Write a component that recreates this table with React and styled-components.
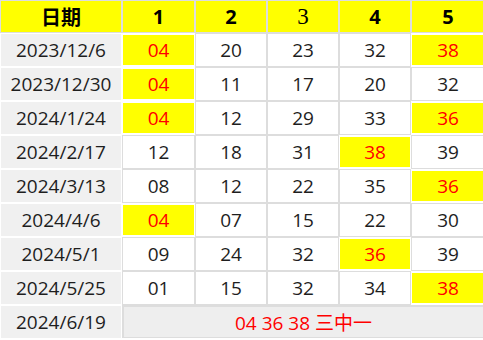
import { Fragment } from "react";
import styled, { createGlobalStyle, css } from "styled-components";

const GlobalStyle = createGlobalStyle`
  body {
    margin: 0;
    background: #ffffff;
    font-family: "Open Sans", "Noto Sans CJK SC", sans-serif;
  }
`;

const HITS = ["04", "36", "38"];

const draws = [
  { date: "2023/12/6", nums: ["04", "20", "23", "32", "38"] },
  { date: "2023/12/30", nums: ["04", "11", "17", "20", "32"] },
  { date: "2024/1/24", nums: ["04", "12", "29", "33", "36"] },
  { date: "2024/2/17", nums: ["12", "18", "31", "38", "39"] },
  { date: "2024/3/13", nums: ["08", "12", "22", "35", "36"] },
  { date: "2024/4/6", nums: ["04", "07", "15", "22", "30"] },
  { date: "2024/5/1", nums: ["09", "24", "32", "36", "39"] },
  { date: "2024/5/25", nums: ["01", "15", "32", "34", "38"] },
];

const Table = styled.div`
  display: grid;
  grid-template-columns: 120px 71px 70px 70px 70px 72px;
  grid-template-rows: 31px repeat(9, 32px);
  gap: 2px;
  padding: 1px 0 0 1px;
  width: 483px;
  box-sizing: border-box;
`;

const Cell = styled.div`
  display: flex;
  align-items: center;
  justify-content: center;
  font-size: 19px;
  color: #1e1e1e;
  white-space: nowrap;

  ${(p) =>
    p.$kind === "head" &&
    css`
      background: #ffff00;
      color: #000000;
      font-size: 20px;
      font-weight: 700;
      box-shadow: 0 0 0 1px #dddddd;
    `}
  ${(p) =>
    p.$kind === "date" &&
    css`
      background: #f0f0f0;
    `}
  ${(p) =>
    p.$kind === "plain" &&
    css`
      background: #ffffff;
      box-shadow: 0 0 0 1px #dddddd;
    `}
  ${(p) =>
    p.$kind === "hit" &&
    css`
      background: #ffff00;
      color: #ff0000;
      margin: 1px 0;
    `}
  ${(p) =>
    p.$kind === "summary" &&
    css`
      grid-column: 2 / span 5;
      background: #eeeeee;
      color: #ff0000;
      box-shadow: 0 0 0 1px #dddddd;
      border: 1px solid #dddddd;
    `}
  ${(p) =>
    p.$serif &&
    css`
      font-family: "Liberation Serif", serif;
      font-size: 23px;
      font-weight: 400;
    `}
`;

export default function App() {
  return (
    <>
      <GlobalStyle />
      <Table>
        <Cell $kind="head">日期</Cell>
        <Cell $kind="head">1</Cell>
        <Cell $kind="head">2</Cell>
        <Cell $kind="head" $serif>
          3
        </Cell>
        <Cell $kind="head">4</Cell>
        <Cell $kind="head">5</Cell>
        {draws.map((d) => (
          <Fragment key={d.date}>
            <Cell $kind="date">{d.date}</Cell>
            {d.nums.map((n, i) => (
              <Cell key={i} $kind={HITS.includes(n) ? "hit" : "plain"}>
                {n}
              </Cell>
            ))}
          </Fragment>
        ))}
        <Cell $kind="date">2024/6/19</Cell>
        <Cell $kind="summary">04 36 38 三中一</Cell>
      </Table>
    </>
  );
}
